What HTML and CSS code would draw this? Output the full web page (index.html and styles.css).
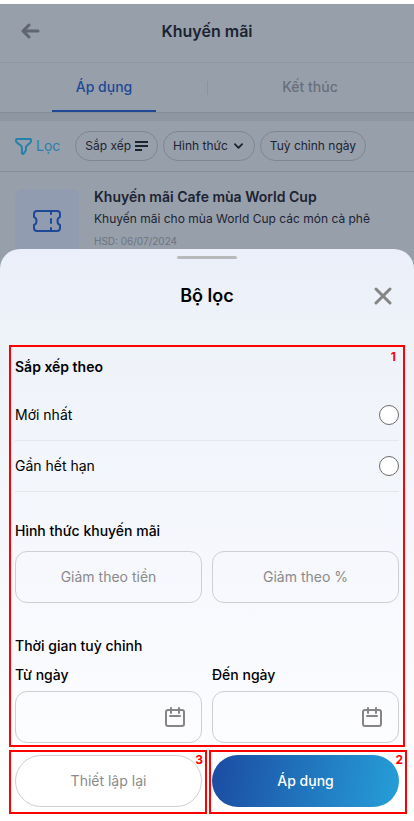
FILE: index.html
```html
<!DOCTYPE html>
<html lang="vi">
	<head>
		<meta charset="utf-8">
		<meta name="viewport" content="width=device-width, initial-scale=1">
		<title>Khuyến mãi</title>
		<link rel="stylesheet" href="styles.css">
	</head>
	<body>
		<div class="page">
			<header class="topbar">
				<button class="back" type="button" aria-label="Quay lại">
					<svg width="20" height="16" viewBox="0 0 20 16"><path d="M18 8H3M9 2L3 8l6 6"/></svg>
				</button>
				<h1>Khuyến mãi</h1>
			</header>
			<nav class="tabs">
				<a class="tab active" href="#">Áp dụng</a>
				<a class="tab" href="#">Kết thúc</a>
			</nav>
			<div class="filters">
				<button class="filter-link" type="button">
					<svg width="17" height="17" viewBox="0 0 17 17"><path d="M1.800 1h13.400c.6 0 .8.5.8 1v1.300c0 .5-.3.900-.7 1.300l-3.700 3.300c-.5.500-.7.900-.7 1.500v2.600c0 .5-.3.900-.7 1.200l-1.700 2.500c-.7.500-1.600 0-1.600-.8V9.500c0-.5-.2-1-.6-1.500L2 4.600C1.400 4.100 1 3.600 1 3V2c0-.6.3-1 .8-1z"/></svg>
					Lọc
				</button>
				<button class="chip" type="button">
					Sắp xếp
					<svg width="13" height="10" viewBox="0 0 13 10"><path d="M0 1h13M0 5h13M0 9h7"/></svg>
				</button>
				<button class="chip" type="button">
					Hình thức
					<svg class="chevron" width="9" height="6" viewBox="0 0 10 6"><path d="M1 1l4 4 4-4"/></svg>
				</button>
				<button class="chip" type="button">Tuỳ chỉnh ngày</button>
			</div>
			<article class="promo">
				<div class="thumb">
					<svg width="28" height="22" viewBox="0 0 28 22"><path d="M4 1h20c2 0 3 1 3 3v3c-1.500.5-2.500 2-2.500 4s1 3.500 2.500 4v3c0 2-1 3-3 3H4c-2 0-3-1-3-3v-3c1.500-.5 2.500-2 2.500-4S2.500 7.500 1 7V4c0-2 1-3 3-3z"/><path d="M18 1v3M18 9v4M18 18v3"/></svg>
				</div>
				<div class="promo-text">
					<h2>Khuyến mãi Cafe mùa World Cup</h2>
					<p>Khuyến mãi cho mùa World Cup các món cà phê</p>
					<p class="expiry">HSD: 06/07/2024</p>
				</div>
			</article>
		</div>

		<form class="sheet" action="" method="">
			<div class="handle"></div>
			<div class="sheet-head">
				<h2>Bộ lọc</h2>
				<button class="close" type="button" aria-label="Đóng">
					<svg width="18" height="18" viewBox="0 0 18 18"><path d="M2 2l14 14M16 2L2 16"/></svg>
				</button>
			</div>

			<div class="options">
				<h3>Sắp xếp theo</h3>
				<div class="row">
					<label for="newest">Mới nhất</label>
					<input id="newest" name="sort" type="radio" value="newest">
				</div>
				<div class="row">
					<label for="expiring">Gần hết hạn</label>
					<input id="expiring" name="sort" type="radio" value="expiring">
				</div>

				<h4 class="kind">Hình thức khuyến mãi</h4>
				<div class="pair">
					<button class="choice" type="button">Giảm theo tiền</button>
					<button class="choice" type="button">Giảm theo %</button>
				</div>

				<h4 class="time">Thời gian tuỳ chỉnh</h4>
				<div class="pair">
					<div class="field">
						<label for="from">Từ ngày</label>
						<div class="date">
							<input id="from" name="from" type="text">
							<svg width="20" height="20" viewBox="0 0 20 20"><path d="M3 3h14c1.200 0 2 .8 2 2v12c0 1.200-.8 2-2 2H3c-1.200 0-2-.8-2-2V5c0-1.200.8-2 2-2zM6 1v5M14 1v5M5 9h10"/></svg>
						</div>
					</div>
					<div class="field">
						<label for="to">Đến ngày</label>
						<div class="date">
							<input id="to" name="to" type="text">
							<svg width="20" height="20" viewBox="0 0 20 20"><path d="M3 3h14c1.200 0 2 .8 2 2v12c0 1.200-.8 2-2 2H3c-1.200 0-2-.8-2-2V5c0-1.200.8-2 2-2zM6 1v5M14 1v5M5 9h10"/></svg>
						</div>
					</div>
				</div>
				<span class="mark mark-options">1</span>
			</div>

			<div class="pair actions">
				<div class="action">
					<button class="reset" type="reset">Thiết lập lại</button>
					<span class="mark mark-reset">3</span>
				</div>
				<div class="action">
					<button class="apply" type="submit">Áp dụng</button>
					<span class="mark mark-apply">2</span>
				</div>
			</div>
		</form>
	</body>
</html>
```

FILE: styles.css
```css
* {
	box-sizing:border-box;
}
body {
	margin:0;
	padding-top:4px;
	background:#fff;
	color:#000;
	font-family:Inter, "Liberation Sans", sans-serif;
	font-size:14px;
	line-height:20px;
}
h1, h2, h3, h4, p {
	margin:0;
}
button {
	margin:0;
	padding:0;
	border:0;
	background:none;
	color:inherit;
	font:inherit;
}
svg {
	display:block;
	flex:none;
	fill:none;
	stroke:currentColor;
	stroke-width:2;
	stroke-linecap:round;
	stroke-linejoin:round;
}

/* dimmed page behind the sheet */
.page {
	background:#979fab;
	color:#1c2331;
	padding-bottom:24px;
}
.topbar {
	display:grid;
	grid-template-columns:20px 1fr 20px;
	align-items:center;
	height:59px;
	padding:0 20px 4px;
	border-bottom:1px solid #8e96a2;
}
.topbar h1 {
	font-size:16px;
	font-weight:600;
	text-align:center;
}
.back {
	color:#5f6672;
}
.back svg {
	stroke-width:3;
}
.tabs {
	display:flex;
	padding:0 52px;
	justify-content:space-between;
	border-bottom:1px solid #858d99;
	background:linear-gradient(#8b939f, #8b939f) center / 1px 14px no-repeat;
}
.tab {
	width:104px;
	padding:14px 0 13px;
	border-bottom:2px solid transparent;
	color:#686f7b;
	font-weight:500;
	text-align:center;
	text-decoration:none;
}
.tab.active {
	color:#1d4996;
	border-color:#1d4996;
}
.filters {
	display:flex;
	align-items:center;
	gap:5px;
	height:59px;
	padding:0 15px;
	border-top:8px solid #8e96a2;
	border-bottom:1px solid #858d99;
}
.filter-link {
	display:flex;
	align-items:center;
	gap:4px;
	margin-right:10px;
	color:#2580ac;
}
.chip {
	display:flex;
	align-items:center;
	gap:4px;
	height:30px;
	padding:0 9px;
	border:1px solid #7e8692;
	border-radius:15px;
	font-size:12px;
	white-space:nowrap;
}
.chip svg {
	stroke-linecap:butt;
}
.chip .chevron {
	margin:0 2px;
	stroke-linecap:round;
}
.promo {
	display:flex;
	gap:15px;
	padding:17px 15px 0;
}
.thumb {
	display:flex;
	align-items:center;
	justify-content:center;
	flex:none;
	width:64px;
	height:64px;
	border-radius:8px;
	background:#929cb0;
	color:#1d4996;
}
.promo-text h2 {
	margin-bottom:4px;
	line-height:16px;
	font-size:14px;
	font-weight:600;
}
.promo-text p {
	font-size:12px;
}
.promo-text .expiry {
	margin-top:2px;
	color:#6d7480;
	font-size:10px;
}

/* bottom sheet */
.sheet {
	position:relative;
	margin-top:-28px;
	padding:7px 15px 14px;
	border-radius:20px 20px 0 0;
	background:linear-gradient(#ebeff9, #eff3f9 20%, #f9fafe 70%, #fff);
}
.handle {
	width:60px;
	height:3px;
	margin:0 auto;
	border-radius:2px;
	background:#b8b9ba;
}
.sheet-head {
	display:grid;
	grid-template-columns:18px 1fr 18px;
	align-items:center;
	padding:24px 7px 49px;
}
.sheet-head h2 {
	grid-column:2;
	line-height:25px;
	font-size:18px;
	font-weight:600;
	text-align:center;
}
.close {
	color:#858585;
}
.close svg {
	stroke-width:3;
}
.options {
	position:relative;
}
.options h3 {
	margin-bottom:13px;
	font-size:14px;
	font-weight:600;
}
.row {
	display:flex;
	align-items:center;
	justify-content:space-between;
	height:51px;
	border-bottom:1px solid #e6e7ea;
}
.row input {
	appearance:none;
	width:20px;
	height:20px;
	margin:0;
	border:1px solid #6b6b6b;
	border-radius:50%;
	background:#fff;
}
.row input:checked {
	border:6px solid #1b4ba2;
}
.options h4 {
	font-size:14px;
	font-weight:500;
}
.kind {
	padding:29px 0 10px;
}
.time {
	padding:33px 0 9px;
}
.pair {
	display:grid;
	grid-template-columns:repeat(2, minmax(0, 1fr));
	gap:10px;
}
.choice, .date {
	height:52px;
	border:1px solid #cfcfd1;
	border-radius:12px;
}
.choice {
	color:#8a8a8c;
}
.field label {
	display:block;
	margin-bottom:6px;
	font-weight:500;
}
.date {
	display:flex;
	align-items:center;
	padding:0 16px;
	color:#858585;
}
.date input {
	flex:1;
	min-width:0;
	height:100%;
	padding:0;
	border:0;
	outline:0;
	background:none;
	font:inherit;
}
.actions {
	margin-top:12px;
}
.action {
	position:relative;
}
.reset, .apply {
	display:block;
	width:100%;
	height:52px;
	border-radius:26px;
}
.reset {
	border:1px solid #cfcfd1;
	background:#fff;
	color:#8a8a8c;
}
.apply {
	background:linear-gradient(100deg, #1b4ba2, #269fd8);
	color:#fff;
	font-weight:500;
}

/* numbered frames laid over the regions */
.mark {
	position:absolute;
	padding-right:2px;
	border:2px solid #f00;
	color:#f00;
	font-size:12px;
	font-weight:700;
	line-height:16px;
	text-align:right;
	pointer-events:none;
}
.mark-options {
	inset:-12px -6px -4px;
	padding:2px 7px;
}
.mark-reset {
	inset:-5px -5px -7px -6px;
}
.mark-apply {
	inset:-5px -8px -7px -3px;
}
```
